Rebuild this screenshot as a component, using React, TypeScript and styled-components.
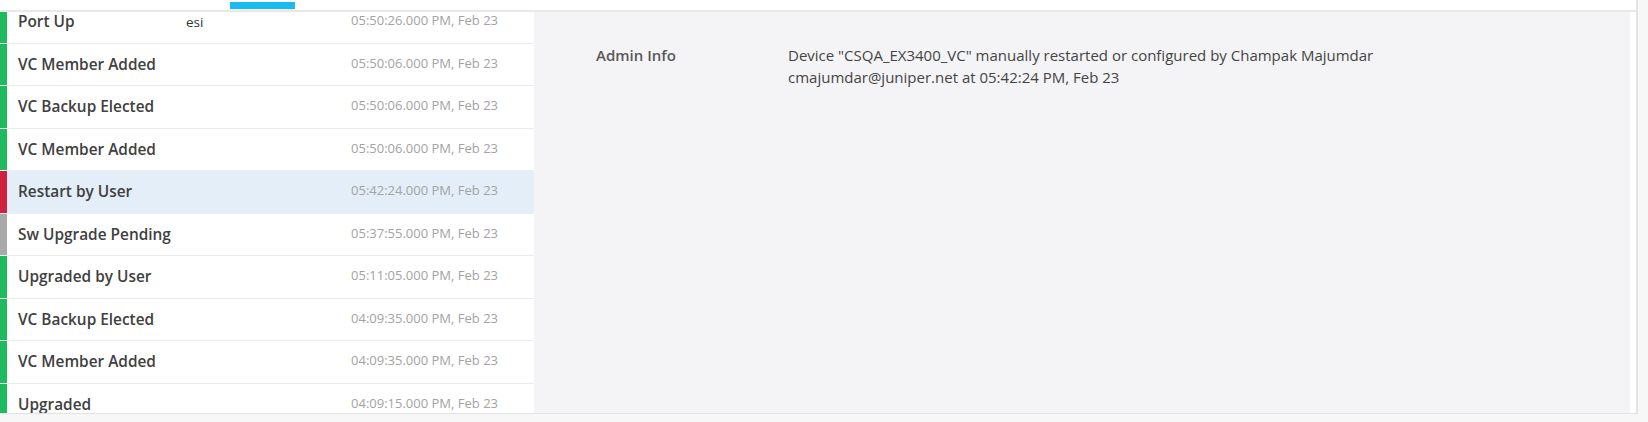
import styled, { createGlobalStyle } from "styled-components";

const GlobalStyle = createGlobalStyle`
  html, body {
    margin: 0;
    padding: 0;
    background: #f7f7f7;
    font-family: "Open Sans", "Noto Sans", "Liberation Sans", sans-serif;
  }
`;

type Status = "ok" | "error" | "pending";

type EventItem = {
  title: string;
  extra?: string;
  time: string;
  status: Status;
  selected?: boolean;
};

const events: EventItem[] = [
  { title: "Port Up", extra: "esi", time: "05:50:26.000 PM, Feb 23", status: "ok" },
  { title: "VC Member Added", time: "05:50:06.000 PM, Feb 23", status: "ok" },
  { title: "VC Backup Elected", time: "05:50:06.000 PM, Feb 23", status: "ok" },
  { title: "VC Member Added", time: "05:50:06.000 PM, Feb 23", status: "ok" },
  { title: "Restart by User", time: "05:42:24.000 PM, Feb 23", status: "error", selected: true },
  { title: "Sw Upgrade Pending", time: "05:37:55.000 PM, Feb 23", status: "pending" },
  { title: "Upgraded by User", time: "05:11:05.000 PM, Feb 23", status: "ok" },
  { title: "VC Backup Elected", time: "04:09:35.000 PM, Feb 23", status: "ok" },
  { title: "VC Member Added", time: "04:09:35.000 PM, Feb 23", status: "ok" },
  { title: "Upgraded", time: "04:09:15.000 PM, Feb 23", status: "ok" },
];

const statusColor: Record<Status, string> = {
  ok: "#1dbb5e",
  error: "#cf2140",
  pending: "#a9a9a9",
};

function App() {
  return (
    <>
      <GlobalStyle />
      <Card>
        <TabBar>
          <TabIndicator />
        </TabBar>
        <Body>
          <EventList>
            <EventScroll>
              {events.map((ev, i) => (
                <EventRow key={i} selected={!!ev.selected}>
                  <StatusBar color={statusColor[ev.status]} />
                  <EventTitle>{ev.title}</EventTitle>
                  {ev.extra && <EventExtra>{ev.extra}</EventExtra>}
                  <EventTime>{ev.time}</EventTime>
                </EventRow>
              ))}
            </EventScroll>
          </EventList>
          <DetailPanel>
            <DetailRow>
              <DetailLabel>Admin Info</DetailLabel>
              <DetailValue>
                Device "CSQA_EX3400_VC" manually restarted or configured by Champak Majumdar
                cmajumdar@juniper.net at 05:42:24 PM, Feb 23
              </DetailValue>
            </DetailRow>
          </DetailPanel>
        </Body>
      </Card>
    </>
  );
}

const Card = styled.div`
  width: 1636px;
  height: 413px;
  background: #ffffff;
  border-right: 2px solid #e3e3e3;
  border-bottom: 1px solid #e3e3e3;
  display: flex;
  flex-direction: column;
`;

const TabBar = styled.div`
  height: 10px;
  padding-left: 230px;
  border-bottom: 2px solid #e8e8e8;
  box-sizing: content-box;
`;

const TabIndicator = styled.div`
  width: 65px;
  height: 7px;
  margin-top: 2px;
  background: #19bcf2;
`;

const Body = styled.div`
  flex: 1;
  display: flex;
  min-height: 0;
  padding-right: 6px;
`;

const EventList = styled.div`
  width: 534px;
  flex-shrink: 0;
  overflow: hidden;
  background: #ffffff;
`;

const EventScroll = styled.div`
  margin-top: -11px;
`;

const EventRow = styled.div<{ selected: boolean }>`
  height: 42.5px;
  box-sizing: border-box;
  display: flex;
  align-items: center;
  border-bottom: 1px solid #ededed;
  background: ${(p) => (p.selected ? "#e4eef8" : "#ffffff")};
  padding-right: 36px;
`;

const StatusBar = styled.div<{ color: string }>`
  width: 7px;
  align-self: stretch;
  background: ${(p) => p.color};
  flex-shrink: 0;
`;

const EventTitle = styled.span`
  margin-left: 11px;
  width: 168px;
  font-size: 15.4px;
  font-weight: 600;
  color: #404040;
  white-space: nowrap;
`;

const EventExtra = styled.span`
  font-size: 13.5px;
  color: #333333;
`;

const EventTime = styled.span`
  margin-left: auto;
  margin-top: -3px;
  font-size: 13px;
  color: #a3a3a3;
  white-space: nowrap;
`;

const DetailPanel = styled.div`
  flex: 1;
  background: #f4f4f6;
  padding: 32px 0 0 62px;
`;

const DetailRow = styled.div`
  display: flex;
  align-items: flex-start;
`;

const DetailLabel = styled.div`
  width: 192px;
  flex-shrink: 0;
  font-size: 15px;
  font-weight: 600;
  line-height: 22px;
  color: #585858;
`;

const DetailValue = styled.div`
  width: 660px;
  font-size: 15px;
  line-height: 22px;
  color: #444444;
`;

export default App;
